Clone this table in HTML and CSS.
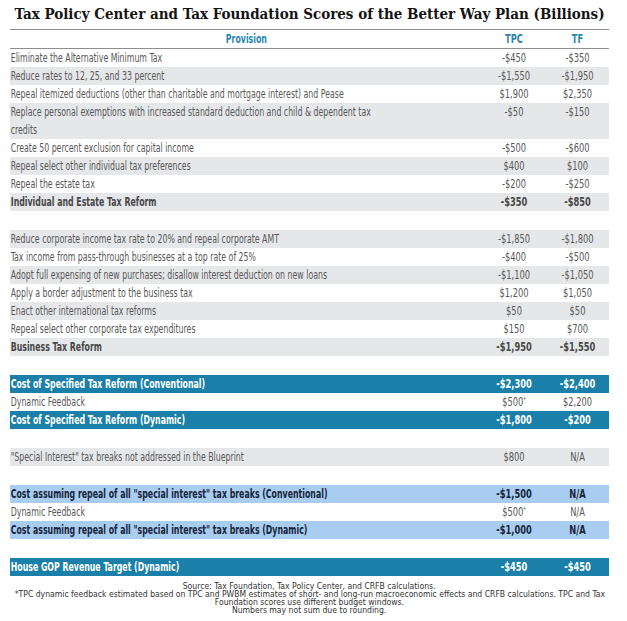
FILE: index.html
```html
<!DOCTYPE html>
<html lang="en">
<head>
<meta charset="utf-8">
<title>Better Way Plan Scores</title>
<link rel="stylesheet" href="styles.css">
</head>
<body>
<div class="page">
  <h1 class="title">Tax Policy Center and Tax Foundation Scores of the Better Way Plan (Billions)</h1>
  <div class="table">
    <div class="row head"><div class="p c">Provision</div><div class="n">TPC</div><div class="n">TF</div></div>

    <div class="row"><div class="p">Eliminate the Alternative Minimum Tax</div><div class="n">-$450</div><div class="n">-$350</div></div>
    <div class="row grey"><div class="p">Reduce rates to 12, 25, and 33 percent</div><div class="n">-$1,550</div><div class="n">-$1,950</div></div>
    <div class="row"><div class="p">Repeal itemized deductions (other than charitable and mortgage interest) and Pease</div><div class="n">$1,900</div><div class="n">$2,350</div></div>
    <div class="row grey tall"><div class="p">Replace personal exemptions with increased standard deduction and child &amp; dependent tax<br>credits</div><div class="n">-$50</div><div class="n">-$150</div></div>
    <div class="row"><div class="p">Create 50 percent exclusion for capital income</div><div class="n">-$500</div><div class="n">-$600</div></div>
    <div class="row grey"><div class="p">Repeal select other individual tax preferences</div><div class="n">$400</div><div class="n">$100</div></div>
    <div class="row"><div class="p">Repeal the estate tax</div><div class="n">-$200</div><div class="n">-$250</div></div>
    <div class="row grey total"><div class="p">Individual and Estate Tax Reform</div><div class="n">-$350</div><div class="n">-$850</div></div>

    <div class="spacer"></div>

    <div class="row grey"><div class="p">Reduce corporate income tax rate to 20% and repeal corporate AMT</div><div class="n">-$1,850</div><div class="n">-$1,800</div></div>
    <div class="row"><div class="p">Tax income from pass-through businesses at a top rate of 25%</div><div class="n">-$400</div><div class="n">-$500</div></div>
    <div class="row grey"><div class="p">Adopt full expensing of new purchases; disallow interest deduction on new loans</div><div class="n">-$1,100</div><div class="n">-$1,050</div></div>
    <div class="row"><div class="p">Apply a border adjustment to the business tax</div><div class="n">$1,200</div><div class="n">$1,050</div></div>
    <div class="row grey"><div class="p">Enact other international tax reforms</div><div class="n">$50</div><div class="n">$50</div></div>
    <div class="row"><div class="p">Repeal select other corporate tax expenditures</div><div class="n">$150</div><div class="n">$700</div></div>
    <div class="row grey total"><div class="p">Business Tax Reform</div><div class="n">-$1,950</div><div class="n">-$1,550</div></div>

    <div class="spacer"></div>

    <div class="row dark"><div class="p">Cost of Specified Tax Reform (Conventional)</div><div class="n">-$2,300</div><div class="n">-$2,400</div></div>
    <div class="row"><div class="p">Dynamic Feedback</div><div class="n">$500<sup>*</sup></div><div class="n">$2,200</div></div>
    <div class="row dark"><div class="p">Cost of Specified Tax Reform (Dynamic)</div><div class="n">-$1,800</div><div class="n">-$200</div></div>

    <div class="spacer"></div>

    <div class="row grey"><div class="p">"Special Interest" tax breaks not addressed in the Blueprint</div><div class="n">$800</div><div class="n">N/A</div></div>

    <div class="spacer"></div>

    <div class="row light"><div class="p">Cost assuming repeal of all "special interest" tax breaks (Conventional)</div><div class="n">-$1,500</div><div class="n">N/A</div></div>
    <div class="row"><div class="p">Dynamic Feedback</div><div class="n">$500<sup>*</sup></div><div class="n">N/A</div></div>
    <div class="row light"><div class="p">Cost assuming repeal of all "special interest" tax breaks (Dynamic)</div><div class="n">-$1,000</div><div class="n">N/A</div></div>

    <div class="spacer"></div>

    <div class="row dark"><div class="p">House GOP Revenue Target (Dynamic)</div><div class="n">-$450</div><div class="n">-$450</div></div>
  </div>
  <div class="foot">
    <p>Source: Tax Foundation, Tax Policy Center, and CRFB calculations.</p>
    <p>*TPC dynamic feedback estimated based on TPC and PWBM estimates of short- and long-run macroeconomic effects and CRFB calculations. TPC and Tax</p>
    <p>Foundation scores use different budget windows.</p>
    <p>Numbers may not sum due to rounding.</p>
  </div>
</div>
</body>
</html>
```

FILE: styles.css
```css
html, body {
  margin: 0;
  padding: 0;
  background: #ffffff;
}

.page {
  width: 627px;
  padding: 0 0 0 10px;
  box-sizing: border-box;
  overflow: hidden;
}

.title {
  margin: 0;
  height: 29px;
  width: 599px;
  text-align: center;
  font-family: "DejaVu Serif Condensed", "DejaVu Serif", serif;
  font-weight: bold;
  font-size: 15px;
  line-height: 29px;
  color: #141414;
  white-space: nowrap;
}

.table {
  width: 599px;
}

.row {
  display: grid;
  grid-template-columns: 472px 64px 63px;
  height: 18px;
  align-items: center;
  font-family: "DejaVu Sans Condensed", "DejaVu Sans", sans-serif;
  font-size: 12px;
  line-height: 18px;
  color: #585858;
}

.row.head {
  border-top: 1px solid #8e8e8e;
  border-bottom: 1px solid #8e8e8e;
  color: #2b86b1;
  font-weight: bold;
}

.row.tall {
  height: 36px;
  align-items: start;
}

.p {
  padding-left: 1px;
  white-space: nowrap;
  transform: scaleX(0.725);
  transform-origin: left center;
}

.p.c {
  text-align: center;
  transform-origin: center center;
}

.n {
  text-align: center;
  white-space: nowrap;
  transform: scaleX(0.77);
  transform-origin: center center;
}

.n sup {
  font-size: 7px;
  line-height: 0;
  vertical-align: 4px;
}

.grey {
  background: #e6e7e9;
}

.total {
  font-weight: bold;
  color: #474747;
}

.dark {
  background: #1a80a9;
  color: #ffffff;
  font-weight: bold;
}

.light {
  background: #a9cdf1;
  color: #16243a;
  font-weight: bold;
}

.spacer {
  height: 19px;
}

.foot {
  width: 599px;
  margin-top: 7px;
  display: flex;
  flex-direction: column;
  align-items: center;
  font-family: "DejaVu Sans Condensed", "DejaVu Sans", sans-serif;
  font-size: 8px;
  line-height: 8px;
  color: #333333;
}

.foot p {
  margin: 0;
  width: max-content;
  white-space: nowrap;
  transform: scaleX(1.07);
  transform-origin: center center;
}
```
